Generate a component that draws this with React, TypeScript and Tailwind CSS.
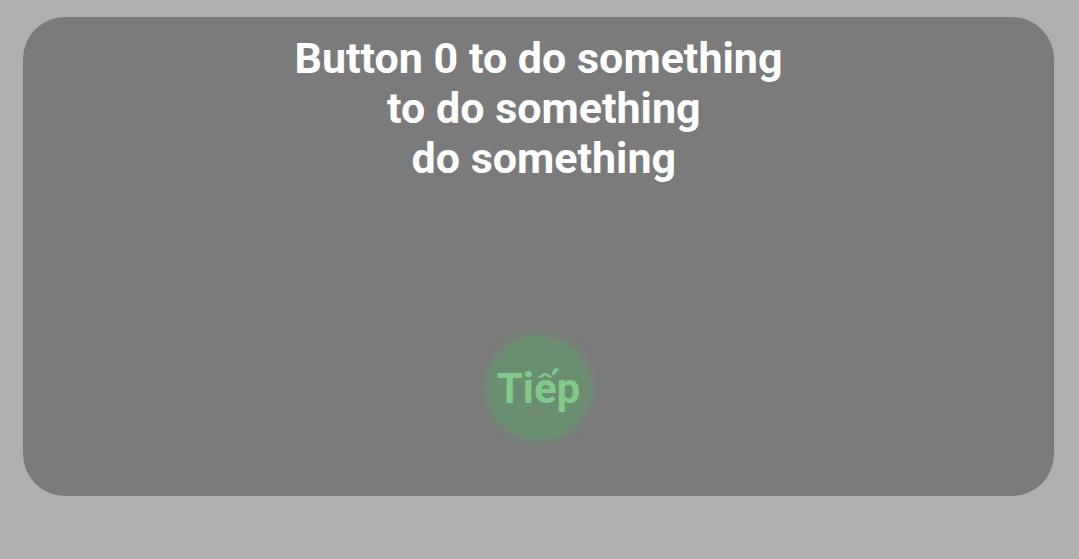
export default function App() {
  return (
    <div className="h-[559px] w-[1079px] bg-[#afafaf] pl-[23px] pt-[17px] font-['Roboto',sans-serif]">
      <div className="flex h-[479px] w-[1031px] flex-col items-center rounded-[42px] bg-[#7b7b7b] pt-[16px]">
        <h1 className="whitespace-pre text-center text-[43px] font-bold leading-[50px] text-white">
          {"Button 0 to do something\n to do something\n do something"}
        </h1>

        <button className="mt-[153px] flex h-[104px] w-[104px] items-center justify-center rounded-full bg-[#6c8e70] text-[42px] font-bold text-[#80c98b] shadow-[0_0_6px_4px_rgba(108,142,112,0.6)]">
          Tiếp
        </button>
      </div>
    </div>
  );
}
